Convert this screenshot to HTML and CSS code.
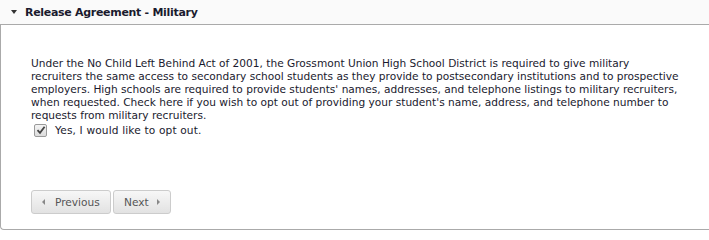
FILE: index.html
```html
<!DOCTYPE html>
<html>
<head>
<meta charset="utf-8">
<link rel="stylesheet" href="styles.css">
</head>
<body>
<div class="panel">
  <div class="panel-header">
    <span class="caret"></span>
    <span class="title">Release Agreement - Military</span>
  </div>
  <div class="panel-body">
    <p class="notice">Under the No Child Left Behind Act of 2001, the Grossmont Union High School District is required to give military<br>recruiters the same access to secondary school students as they provide to postsecondary institutions and to prospective<br>employers. High schools are required to provide students' names, addresses, and telephone listings to military recruiters,<br>when requested. Check here if you wish to opt out of providing your student's name, address, and telephone number to<br>requests from military recruiters.</p>
    <label class="opt">
      <span class="box"><svg width="10" height="10" viewBox="0 0 10 10"><path d="M1.5 5.2 L4 7.8 L8.6 1.8" fill="none" stroke="#444" stroke-width="1.8"/></svg></span>
      <span class="opt-text">Yes, I would like to opt out.</span>
    </label>
    <div class="nav">
      <button class="btn btn-prev"><span class="tri-left"></span>Previous</button>
      <button class="btn btn-next">Next<span class="tri-right"></span></button>
    </div>
  </div>
</div>
</body>
</html>
```
FILE: styles.css
```css
html, body { margin: 0; padding: 0; background: #fff; }
body { font-family: "DejaVu Sans", Verdana, sans-serif; color: #1a1a2e; }
.panel {
  width: 740px;
  border-left: 1px solid #aaa;
  border-bottom: 1px solid #aaa;
  border-bottom-left-radius: 4px;
}
.panel-header {
  height: 24px;
  background: #fafafa;
  border-bottom: 1px solid #aaa;
  display: flex;
  align-items: center;
  margin-left: -1px;
  padding-left: 11px;
}
.caret {
  width: 0; height: 0;
  border-left: 3px solid transparent;
  border-right: 3px solid transparent;
  border-top: 4px solid #333;
  margin-right: 8px;
}
.title { font-weight: bold; font-size: 11px; color: #1a1a2e; letter-spacing: -0.3px; }
.panel-body { padding: 32px 0 15px 30px; }
.notice {
  margin: 0;
  font-size: 10.6px;
  line-height: 13px;
  white-space: nowrap;
}
.opt { display: flex; align-items: center; margin-top: 0; padding-left: 3px; height: 16px; }
.box {
  width: 11px; height: 11px;
  border: 1px solid #9a9a9a;
  border-radius: 2px;
  background: linear-gradient(#f4f4f4, #dcdcdc);
  display: flex; align-items: center; justify-content: center;
  margin-right: 8px;
}
.opt-text { font-size: 10.6px; letter-spacing: 0.15px; }
.nav { display: flex; gap: 2px; margin-top: 52px; }
.btn {
  height: 24px;
  border: 1px solid #ccc;
  border-radius: 3px;
  background: linear-gradient(#f7f7f7, #e2e2e2);
  color: #555;
  font-family: "DejaVu Sans", Verdana, sans-serif;
  font-size: 10.6px;
  display: flex; align-items: center;
  padding: 0 10px;
  margin: 0;
}
.btn-prev { width: 80px; }
.btn-next { width: 58px; }
.tri-left {
  width: 0; height: 0;
  border-top: 3px solid transparent;
  border-bottom: 3px solid transparent;
  border-right: 3px solid #888;
  margin-right: 10px;
}
.tri-right {
  width: 0; height: 0;
  border-top: 3px solid transparent;
  border-bottom: 3px solid transparent;
  border-left: 3px solid #888;
  margin-left: 8px;
}
```
